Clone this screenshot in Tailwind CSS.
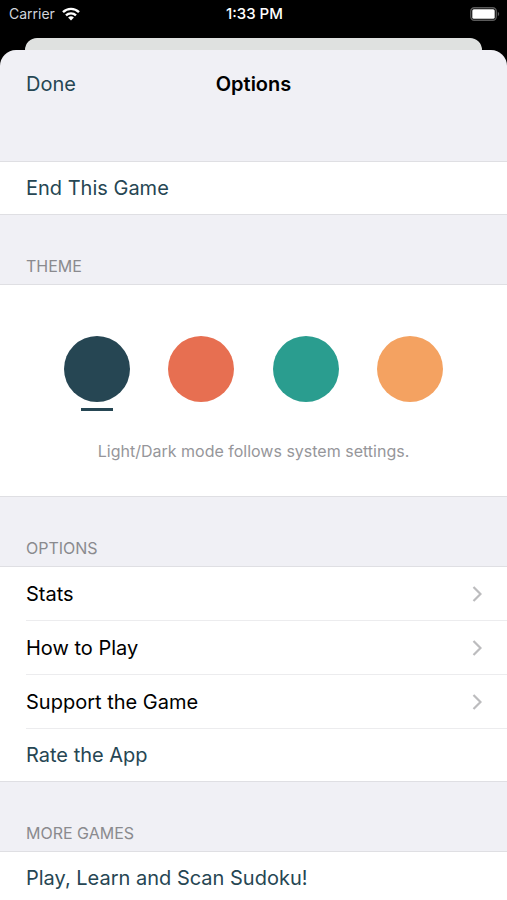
<!DOCTYPE html>
<html lang="en">
<head>
    <meta charset="UTF-8">
    <meta name="viewport" content="width=device-width, initial-scale=1.0">
    <title>Options</title>
    <script src="https://cdn.jsdelivr.net/npm/@tailwindcss/browser@4"></script>
</head>
<body class="bg-black font-['Inter','Liberation_Sans',sans-serif] text-black">
    <div class="h-screen flex flex-col overflow-hidden">
        <!-- Status bar -->
        <div class="grid grid-cols-3 items-center h-7 pl-[9px] pr-[7px] text-white shrink-0">
            <div class="flex items-center gap-[7px]">
                <span class="text-sm text-gray-300">Carrier</span>
                <svg class="w-[18px] h-[14px]" viewBox="0 0 18 14" fill="none" stroke="#fff" stroke-width="2.4">
                    <path d="M1 5.2a11.4 11.4 0 0 1 16 0" />
                    <path d="M4 8.4a7.2 7.2 0 0 1 10 0" />
                    <path d="M9 13.6 6.1 10.6a4.2 4.2 0 0 1 5.8 0z" fill="#fff" stroke="none" />
                </svg>
            </div>
            <div class="text-center text-[15px] leading-5 font-medium">1:33 PM</div>
            <svg class="justify-self-end w-[30px] h-[14px]" viewBox="0 0 30 14">
                <rect x="0.75" y="0.75" width="25.5" height="12.5" rx="3.5" fill="none" stroke="#5a5a5a" stroke-width="1.3" />
                <rect x="2.3" y="2.2" width="22.4" height="9.6" rx="1.6" fill="#fff" />
                <path d="M27.8 4.7a2.6 2.6 0 0 1 0 4.6z" fill="#5a5a5a" />
            </svg>
        </div>

        <!-- Card behind the sheet -->
        <div class="mt-2.5 mx-[25px] h-3 rounded-t-xl bg-[#dfe1e0] shrink-0"></div>

        <!-- Sheet -->
        <main class="grow min-h-0 overflow-hidden rounded-t-2xl bg-[#f0f0f5]">
            <header class="grid grid-cols-3 h-[111px] pt-5 px-[26px] items-start text-xl leading-7">
                <button class="justify-self-start text-[#264653]">Done</button>
                <h1 class="text-center font-semibold">Options</h1>
            </header>

            <section class="bg-white border-y border-[#dfdfe3]">
                <button class="w-full h-[52px] px-[26px] text-left text-xl text-[#264653]">End This Game</button>
            </section>

            <h2 class="h-[69px] pt-[39px] px-[26px] text-base text-[#8a8a8e]">THEME</h2>
            <section class="h-[213px] pt-[51px] bg-white border-y border-[#dfdfe3]">
                <div class="flex justify-between px-16">
                    <button aria-label="Navy" class="flex flex-col items-center">
                        <span class="size-[66px] rounded-full bg-[#264653]"></span>
                        <span class="mt-1.5 w-8 h-[3px] bg-[#264653]"></span>
                    </button>
                    <button aria-label="Coral" class="size-[66px] rounded-full bg-[#e76f51]"></button>
                    <button aria-label="Teal" class="size-[66px] rounded-full bg-[#2a9d8f]"></button>
                    <button aria-label="Orange" class="size-[66px] rounded-full bg-[#f4a261]"></button>
                </div>
                <p class="mt-7 text-center text-base text-[#96969a]">Light/Dark mode follows system settings.</p>
            </section>

            <h2 class="h-[69px] pt-[39px] px-[26px] text-base text-[#8a8a8e]">OPTIONS</h2>
            <section class="pl-[26px] bg-white border-y border-[#dfdfe3] text-xl">
                <a href="#" class="flex items-center justify-between h-[54px] pr-[25px] border-b border-[#ececee]">
                    Stats
                    <svg class="w-[10px] h-4" viewBox="0 0 10 16" fill="none" stroke="#bcbcbe" stroke-width="2.2"><path d="M1.5 1 8.5 8l-7 7" /></svg>
                </a>
                <a href="#" class="flex items-center justify-between h-[54px] pr-[25px] border-b border-[#ececee]">
                    How to Play
                    <svg class="w-[10px] h-4" viewBox="0 0 10 16" fill="none" stroke="#bcbcbe" stroke-width="2.2"><path d="M1.5 1 8.5 8l-7 7" /></svg>
                </a>
                <a href="#" class="flex items-center justify-between h-[54px] pr-[25px] border-b border-[#ececee]">
                    Support the Game
                    <svg class="w-[10px] h-4" viewBox="0 0 10 16" fill="none" stroke="#bcbcbe" stroke-width="2.2"><path d="M1.5 1 8.5 8l-7 7" /></svg>
                </a>
                <a href="#" class="flex items-center h-[52px] text-[#264653]">Rate the App</a>
            </section>

            <h2 class="h-[69px] pt-[39px] px-[26px] text-base text-[#8a8a8e]">MORE GAMES</h2>
            <section class="bg-white border-y border-[#dfdfe3]">
                <a href="#" class="flex items-center h-[52px] px-[26px] text-xl text-[#264653]">Play, Learn and Scan Sudoku!</a>
            </section>
        </main>
    </div>
</body>
</html>
